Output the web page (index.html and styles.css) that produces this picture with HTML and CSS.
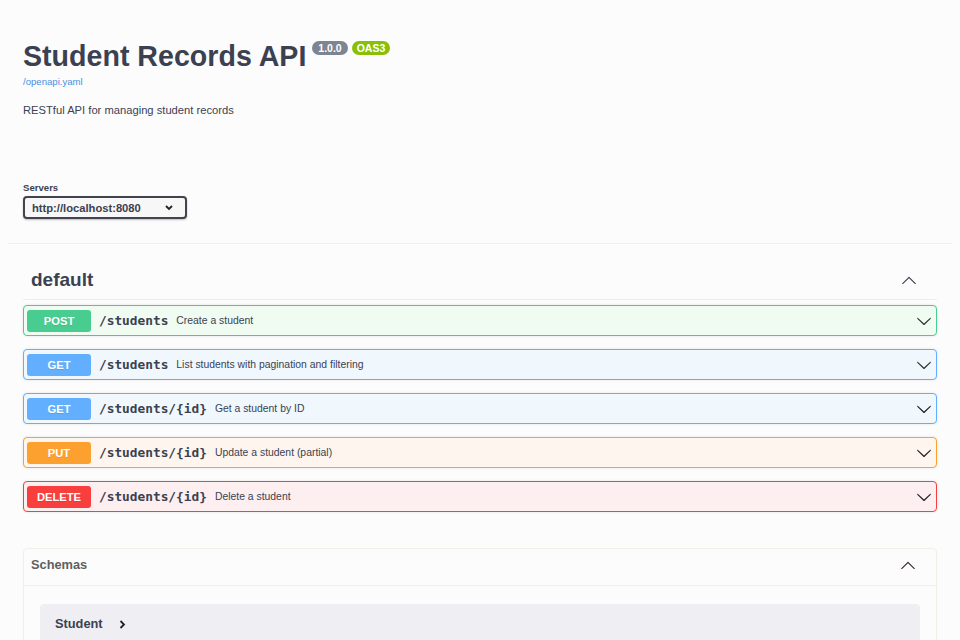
FILE: index.html
```html
<!DOCTYPE html>
<html lang="en">
<head>
<meta charset="utf-8">
<title>Student Records API</title>
<link rel="stylesheet" href="styles.css">
</head>
<body>
<div class="page">
  <div class="wrap">
    <div class="info">
      <h1 class="title">Student Records API<span class="badge version">1.0.0</span><span class="badge oas">OAS3</span></h1>
      <a class="spec-link" href="#">/openapi.yaml</a>
      <p class="desc">RESTful API for managing student records</p>
    </div>
  </div>
  <div class="scheme">
    <div class="wrap">
      <div class="servers-label">Servers</div>
      <div class="select">
        <span>http://localhost:8080</span>
        <svg class="select-arrow" width="8" height="6" viewBox="0 0 8 6"><polyline points="1,1 4,4 7,1" fill="none" stroke="#222" stroke-width="1.8"/></svg>
      </div>
    </div>
  </div>
  <div class="wrap">
    <div class="tag">
      <h3 class="tag-name">default</h3>
      <svg class="arrow" width="16" height="16" viewBox="0 0 20 20"><path d="M17.418 14.908c.272.268.709.268.979 0s.271-.701 0-.969l-7.908-7.83c-.27-.268-.707-.268-.979 0l-7.908 7.83c-.27.268-.27.701 0 .969.271.268.709.268.979 0L10 7.767l7.418 7.141z" fill="#3b4151"/></svg>
    </div>
    <div class="ops">
      <div class="op post">
        <span class="method">POST</span>
        <span class="path">/students</span>
        <span class="summary">Create a student</span>
        <svg class="arrow" width="16" height="16" viewBox="0 0 20 20"><path d="M17.418 6.109c.272-.268.709-.268.979 0s.271.701 0 .969l-7.908 7.83c-.27.268-.707.268-.979 0l-7.908-7.83c-.27-.268-.27-.701 0-.969.271-.268.709-.268.979 0L10 13.25l7.418-7.141z" fill="#2a3a2a"/></svg>
      </div>
      <div class="op get">
        <span class="method">GET</span>
        <span class="path">/students</span>
        <span class="summary">List students with pagination and filtering</span>
        <svg class="arrow" width="16" height="16" viewBox="0 0 20 20"><path d="M17.418 6.109c.272-.268.709-.268.979 0s.271.701 0 .969l-7.908 7.83c-.27.268-.707.268-.979 0l-7.908-7.83c-.27-.268-.27-.701 0-.969.271-.268.709-.268.979 0L10 13.25l7.418-7.141z" fill="#2a3a2a"/></svg>
      </div>
      <div class="op get">
        <span class="method">GET</span>
        <span class="path">/students/{id}</span>
        <span class="summary">Get a student by ID</span>
        <svg class="arrow" width="16" height="16" viewBox="0 0 20 20"><path d="M17.418 6.109c.272-.268.709-.268.979 0s.271.701 0 .969l-7.908 7.83c-.27.268-.707.268-.979 0l-7.908-7.83c-.27-.268-.27-.701 0-.969.271-.268.709-.268.979 0L10 13.25l7.418-7.141z" fill="#222"/></svg>
      </div>
      <div class="op put">
        <span class="method">PUT</span>
        <span class="path">/students/{id}</span>
        <span class="summary">Update a student (partial)</span>
        <svg class="arrow" width="16" height="16" viewBox="0 0 20 20"><path d="M17.418 6.109c.272-.268.709-.268.979 0s.271.701 0 .969l-7.908 7.83c-.27.268-.707.268-.979 0l-7.908-7.83c-.27-.268-.27-.701 0-.969.271-.268.709-.268.979 0L10 13.25l7.418-7.141z" fill="#222"/></svg>
      </div>
      <div class="op delete">
        <span class="method">DELETE</span>
        <span class="path">/students/{id}</span>
        <span class="summary">Delete a student</span>
        <svg class="arrow" width="16" height="16" viewBox="0 0 20 20"><path d="M17.418 6.109c.272-.268.709-.268.979 0s.271.701 0 .969l-7.908 7.83c-.27.268-.707.268-.979 0l-7.908-7.83c-.27-.268-.27-.701 0-.969.271-.268.709-.268.979 0L10 13.25l7.418-7.141z" fill="#222"/></svg>
      </div>
    </div>
    <section class="models">
      <div class="models-head">
        <h4 class="models-title">Schemas</h4>
        <svg class="arrow" width="16" height="16" viewBox="0 0 20 20"><path d="M17.418 14.908c.272.268.709.268.979 0s.271-.701 0-.969l-7.908-7.83c-.27-.268-.707-.268-.979 0l-7.908 7.83c-.27.268-.27.701 0 .969.271.268.709.268.979 0L10 7.767l7.418 7.141z" fill="#3b2a2a"/></svg>
      </div>
      <div class="models-body">
        <div class="model">
          <span class="model-name">Student</span>
          <svg class="model-toggle" width="7" height="9" viewBox="0 0 7 9"><polyline points="1.5,1 5,4.5 1.5,8" fill="none" stroke="#222" stroke-width="1.8"/></svg>
        </div>
      </div>
    </section>
  </div>
</div>
</body>
</html>
```
FILE: styles.css
```css
html, body {
  margin: 0;
  padding: 0;
  background: #fcfcfd;
  font-family: "Liberation Sans", Arial, sans-serif;
  color: #3b4151;
}

.page {
  padding: 0 8px;
  height: 640px;
  overflow: hidden;
}

.wrap {
  padding: 0 15px;
}

.info {
  padding: 39px 0 41px;
}

.title {
  margin: 0;
  font-size: 28.6px;
  line-height: 35px;
  font-weight: 700;
  color: #3b4151;
}

.badge {
  display: inline-block;
  vertical-align: top;
  margin-top: 2px;
  height: 14px;
  line-height: 14px;
  border-radius: 57px;
  font-size: 10.5px;
  font-weight: 700;
  color: #fff;
}

.version {
  margin-left: 6px;
  padding: 0 6px;
  background: #7d8492;
}

.oas {
  margin-left: 4px;
  padding: 0 5px;
  background: #89bf04;
}

.spec-link {
  display: block;
  margin-top: 2px;
  font-size: 9.6px;
  line-height: 12px;
  color: #4990e2;
  text-decoration: none;
}

.desc {
  margin: 15px 0 0;
  font-size: 11.2px;
  line-height: 14px;
  color: #3b4151;
}

.scheme {
  padding: 24px 0;
  border-bottom: 1px solid #f1f1ea;
}

.servers-label {
  font-size: 9.6px;
  line-height: 12px;
  font-weight: 700;
  color: #3b4151;
  margin-bottom: 2px;
}

.select {
  box-sizing: border-box;
  width: 164px;
  height: 23px;
  border: 2px solid #41444e;
  border-radius: 4px;
  background: #f7f7f7;
  box-shadow: 0 1px 2px 0 rgba(0, 0, 0, 0.25);
  display: flex;
  align-items: center;
  justify-content: space-between;
  padding: 0 12px 0 7px;
  font-size: 11.2px;
  font-weight: 700;
  color: #3b4151;
}

.select-arrow {
  display: block;
  margin-top: 1px;
}

.tag {
  margin-top: 15px;
  padding: 9px 16px 8px 8px;
  border-bottom: 1px solid #efefea;
  display: flex;
  align-items: center;
  justify-content: space-between;
}

.tag-name {
  margin: 0;
  font-size: 19px;
  line-height: 23px;
  font-weight: 700;
  color: #3b4151;
}

.arrow {
  display: block;
  margin-right: 4px;
}

.ops {
  margin-top: 5px;
  display: flex;
  flex-direction: column;
  gap: 13px;
}

.op {
  box-sizing: border-box;
  height: 31px;
  border: 1px solid;
  border-radius: 4px;
  box-shadow: 0 0 3px rgba(0, 0, 0, 0.1);
  padding: 0 0 0 3px;
  display: flex;
  align-items: center;
}

.method {
  width: 64px;
  height: 22px;
  line-height: 22px;
  border-radius: 3px;
  text-align: center;
  color: #fff;
  font-size: 11.2px;
  font-weight: 700;
  text-shadow: 0 1px 0 rgba(0, 0, 0, 0.1);
  flex: none;
}

.path {
  padding: 0 8px;
  font-family: "DejaVu Sans Mono", "Liberation Mono", monospace;
  font-size: 12.8px;
  font-weight: 700;
  color: #3b4151;
}

.summary {
  flex: 1;
  font-size: 10.4px;
  color: #3b4151;
}

.post { background: #f0fbf2; border-color: #49cc90; }
.post .method { background: #49cc90; }
.get { background: #f0f8fe; border-color: #61affe; }
.get .method { background: #61affe; }
.put { background: #fef6ee; border-color: #fca130; }
.put .method { background: #fca130; }
.delete { background: #fdeef0; border-color: #f93e3e; }
.delete .method { background: #f93e3e; }

.models {
  margin-top: 36px;
  border: 1px solid #f0f0e8;
  border-radius: 4px;
  height: 200px;
}

.models-head {
  display: flex;
  align-items: center;
  justify-content: space-between;
  padding: 6px 16px 11px 7px;
  border-bottom: 1px solid #f0f0e8;
}

.models-title {
  margin: 0;
  font-size: 12.8px;
  line-height: 19px;
  font-weight: 700;
  color: #606060;
}

.models-body {
  padding: 18px 16px 0;
}

.model {
  background: #efeff3;
  border-radius: 4px;
  padding: 12px 15px;
  display: flex;
  gap: 16px;
  height: 60px;
  align-items: flex-start;
}

.model-name {
  font-size: 12.8px;
  line-height: 16px;
  font-weight: 700;
  color: #3b4151;
}

.model-toggle {
  display: block;
  margin-top: 4px;
}
```
